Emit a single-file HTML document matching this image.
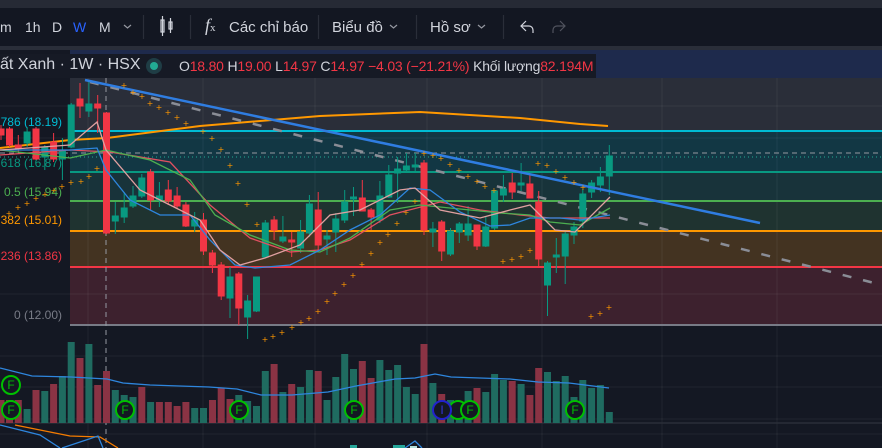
<!DOCTYPE html>
<html><head><meta charset="utf-8"><style>
*{margin:0;padding:0;box-sizing:border-box}
body{width:882px;height:448px;overflow:hidden;background:#141823;font-family:"Liberation Sans","Noto Sans CJK SC",sans-serif;position:relative}
.t{position:absolute;color:#d1d4dc;font-size:14px;white-space:nowrap}
svg{position:absolute;left:0;top:0}
</style></head><body>
<svg width="882" height="448" viewBox="0 0 882 448">
<rect x="0" y="0" width="882" height="8" fill="#262a35"/>
<rect x="0" y="8" width="882" height="38" fill="#131722"/>
<rect x="0" y="46" width="882" height="4" fill="#2a2e39"/>
<rect x="70" y="50" width="812" height="28" fill="#1e2a4c"/>
<rect x="0" y="50" width="70" height="28" fill="#141823"/>
<rect x="0" y="54" width="596" height="24" fill="#161a25"/>
<rect x="70" y="78" width="812" height="53" fill="#2a2e39"/>
<rect x="70" y="131" width="812" height="41" fill="#123744"/>
<rect x="70" y="172" width="812" height="29" fill="#18333a"/>
<rect x="70" y="201" width="812" height="30" fill="#1f3330"/>
<rect x="70" y="231" width="812" height="36" fill="#433321"/>
<rect x="70" y="267" width="812" height="58" fill="#3d212e"/>
<g stroke="#ffffff" stroke-opacity="0.06" stroke-width="1">
<line x1="88" y1="78" x2="88" y2="448"/><line x1="203" y1="78" x2="203" y2="448"/><line x1="315" y1="78" x2="315" y2="448"/><line x1="427" y1="78" x2="427" y2="448"/><line x1="542" y1="78" x2="542" y2="448"/><line x1="662" y1="78" x2="662" y2="448"/><line x1="777" y1="78" x2="777" y2="448"/>
<line x1="0" y1="106" x2="882" y2="106"/><line x1="0" y1="138" x2="882" y2="138"/><line x1="0" y1="294" x2="882" y2="294"/><line x1="0" y1="356" x2="882" y2="356"/><line x1="0" y1="387" x2="882" y2="387"/><line x1="0" y1="419" x2="882" y2="419"/><line x1="0" y1="434" x2="882" y2="434"/>
</g>
<line x1="70" y1="131" x2="882" y2="131" stroke="#00bcd4" stroke-width="2"/>
<line x1="70" y1="172" x2="882" y2="172" stroke="#089981" stroke-width="2"/>
<line x1="70" y1="201" x2="882" y2="201" stroke="#4caf50" stroke-width="2"/>
<line x1="70" y1="231" x2="882" y2="231" stroke="#ff9800" stroke-width="2"/>
<line x1="70" y1="267" x2="882" y2="267" stroke="#f23645" stroke-width="2"/>
<line x1="70" y1="325" x2="882" y2="325" stroke="#787b86" stroke-width="2"/>
<line x1="0" y1="153" x2="882" y2="153" stroke="#9598a1" stroke-dasharray="5,4"/>
<line x1="0" y1="157" x2="882" y2="157" stroke="#22ab94" stroke-dasharray="1,3"/>
<line x1="0" y1="423" x2="882" y2="423" stroke="#2a2e39" stroke-width="1.5"/>
<line x1="106" y1="78" x2="106" y2="448" stroke="#9598a1" stroke-dasharray="5,4"/>
<g font-size="12" text-anchor="end" font-family="Liberation Sans,sans-serif">
<text x="62" y="126" fill="#00bcd4">786 (18.19)</text>
<text x="62" y="167" fill="#089981">.618 (16.87)</text>
<text x="62" y="196" fill="#4caf50">0.5 (15.94)</text>
<text x="62" y="224" fill="#ff9800">382 (15.01)</text>
<text x="62" y="260" fill="#f23645">.236 (13.86)</text>
<text x="62" y="319" fill="#787b86">0 (12.00)</text>
</g>
<polyline fill="none" stroke="#ff9800" stroke-width="2" points="0,148 70,140 107,138 200,126 320,116 420,112 520,118 580,124 608,126"/>
<line x1="90" y1="82" x2="882" y2="285" stroke="#8a8d96" stroke-width="2.5" stroke-dasharray="9,12"/>
<g stroke-width="1">
<g stroke="#f23645" fill="#f23645">
<line x1="1" y1="125" x2="1" y2="140"/><rect x="-2" y="129" width="6" height="6"/>
<line x1="9.5" y1="127" x2="9.5" y2="147"/><rect x="6.5" y="129" width="6" height="16"/>
<line x1="18.3" y1="135" x2="18.3" y2="152"/><rect x="15.3" y="145" width="6" height="3"/>
<line x1="36" y1="127" x2="36" y2="160"/><rect x="33" y="129" width="6" height="30"/>
<line x1="53.6" y1="133" x2="53.6" y2="162"/><rect x="50.6" y="142" width="6" height="17"/>
<line x1="80" y1="83" x2="80" y2="118"/><rect x="77" y="99" width="6" height="7"/>
<line x1="97.7" y1="95" x2="97.7" y2="133"/><rect x="94.7" y="104" width="6" height="4"/>
<line x1="106.5" y1="112" x2="106.5" y2="234"/><rect x="103.5" y="113" width="6" height="120"/>
<line x1="150.6" y1="169" x2="150.6" y2="210"/><rect x="147.6" y="172" width="6" height="28"/>
<line x1="168.3" y1="180" x2="168.3" y2="205"/><rect x="165.3" y="190" width="6" height="11"/>
<line x1="177.1" y1="187" x2="177.1" y2="208"/><rect x="174.1" y="196" width="6" height="10"/>
<line x1="185.9" y1="202" x2="185.9" y2="227"/><rect x="182.9" y="205" width="6" height="21"/>
<line x1="203.5" y1="213" x2="203.5" y2="255"/><rect x="200.5" y="220" width="6" height="31"/>
<line x1="212.4" y1="250" x2="212.4" y2="273"/><rect x="209.4" y="253" width="6" height="12"/>
<line x1="221.2" y1="262" x2="221.2" y2="300"/><rect x="218.2" y="265" width="6" height="31"/>
<line x1="238.8" y1="272" x2="238.8" y2="325"/><rect x="235.8" y="274" width="6" height="34"/>
<line x1="274.1" y1="216" x2="274.1" y2="240"/><rect x="271.1" y="220" width="6" height="10"/>
<line x1="291.7" y1="232" x2="291.7" y2="257"/><rect x="288.7" y="240" width="6" height="2"/>
<line x1="318.2" y1="192" x2="318.2" y2="250"/><rect x="315.2" y="210" width="6" height="35"/>
<line x1="362.3" y1="180" x2="362.3" y2="211"/><rect x="359.3" y="198" width="6" height="13"/>
<line x1="371.1" y1="208" x2="371.1" y2="230"/><rect x="368.1" y="210" width="6" height="7"/>
<line x1="424" y1="160" x2="424" y2="235"/><rect x="421" y="163" width="6" height="67"/>
<line x1="441.7" y1="220" x2="441.7" y2="261"/><rect x="438.7" y="222" width="6" height="29"/>
<line x1="477" y1="225" x2="477" y2="250"/><rect x="474" y="225" width="6" height="21"/>
<line x1="512.2" y1="173" x2="512.2" y2="199"/><rect x="509.2" y="183" width="6" height="9"/>
<line x1="529.9" y1="175" x2="529.9" y2="198"/><rect x="526.9" y="184" width="6" height="14"/>
<line x1="538.7" y1="191" x2="538.7" y2="266"/><rect x="535.7" y="202" width="6" height="57"/>
</g>
<g stroke="#089981" fill="#089981">
<line x1="27.1" y1="127" x2="27.1" y2="147"/><rect x="24.1" y="132" width="6" height="11"/>
<line x1="44.8" y1="145" x2="44.8" y2="170"/><rect x="41.8" y="147" width="6" height="10"/>
<line x1="62.4" y1="138" x2="62.4" y2="180"/><rect x="59.4" y="151" width="6" height="8"/>
<line x1="71.2" y1="103" x2="71.2" y2="148"/><rect x="68.2" y="105" width="6" height="42"/>
<line x1="88.9" y1="80" x2="88.9" y2="117"/><rect x="85.9" y="104" width="6" height="7"/>
<line x1="115.3" y1="202" x2="115.3" y2="234"/><rect x="112.3" y="216" width="6" height="5"/>
<line x1="124.2" y1="192" x2="124.2" y2="223"/><rect x="121.2" y="208" width="6" height="9"/>
<line x1="133" y1="186" x2="133" y2="208"/><rect x="130" y="196" width="6" height="10"/>
<line x1="141.8" y1="174" x2="141.8" y2="198"/><rect x="138.8" y="178" width="6" height="18"/>
<line x1="159.4" y1="182" x2="159.4" y2="207"/><rect x="156.4" y="196" width="6" height="4"/>
<line x1="194.7" y1="212" x2="194.7" y2="232"/><rect x="191.7" y="220" width="6" height="6"/>
<line x1="230" y1="267" x2="230" y2="318"/><rect x="227" y="277" width="6" height="21"/>
<line x1="247.6" y1="295" x2="247.6" y2="339"/><rect x="244.6" y="301" width="6" height="16"/>
<line x1="256.5" y1="277" x2="256.5" y2="312"/><rect x="253.5" y="277" width="6" height="34"/>
<line x1="265.3" y1="220" x2="265.3" y2="257"/><rect x="262.3" y="223" width="6" height="34"/>
<line x1="282.9" y1="216" x2="282.9" y2="243"/><rect x="279.9" y="237" width="6" height="4"/>
<line x1="300.6" y1="220" x2="300.6" y2="253"/><rect x="297.6" y="232" width="6" height="16"/>
<line x1="309.4" y1="195" x2="309.4" y2="237"/><rect x="306.4" y="204" width="6" height="29"/>
<line x1="327" y1="230" x2="327" y2="255"/><rect x="324" y="236" width="6" height="3"/>
<line x1="335.8" y1="213" x2="335.8" y2="252"/><rect x="332.8" y="219" width="6" height="13"/>
<line x1="344.7" y1="190" x2="344.7" y2="223"/><rect x="341.7" y="202" width="6" height="18"/>
<line x1="353.5" y1="187" x2="353.5" y2="216"/><rect x="350.5" y="197" width="6" height="2"/>
<line x1="379.9" y1="181" x2="379.9" y2="223"/><rect x="376.9" y="196" width="6" height="24"/>
<line x1="388.8" y1="165" x2="388.8" y2="198"/><rect x="385.8" y="175" width="6" height="22"/>
<line x1="397.6" y1="157" x2="397.6" y2="203"/><rect x="394.6" y="169" width="6" height="4"/>
<line x1="406.4" y1="153" x2="406.4" y2="172"/><rect x="403.4" y="166" width="6" height="4"/>
<line x1="415.2" y1="153" x2="415.2" y2="172"/><rect x="412.2" y="165" width="6" height="2"/>
<line x1="432.9" y1="222" x2="432.9" y2="247"/><rect x="429.9" y="229" width="6" height="3"/>
<line x1="450.5" y1="228" x2="450.5" y2="256"/><rect x="447.5" y="231" width="6" height="23"/>
<line x1="459.3" y1="222" x2="459.3" y2="243"/><rect x="456.3" y="224" width="6" height="8"/>
<line x1="468.1" y1="206" x2="468.1" y2="241"/><rect x="465.1" y="224" width="6" height="11"/>
<line x1="485.8" y1="217" x2="485.8" y2="247"/><rect x="482.8" y="227" width="6" height="19"/>
<line x1="494.6" y1="190" x2="494.6" y2="230"/><rect x="491.6" y="191" width="6" height="37"/>
<line x1="503.4" y1="175" x2="503.4" y2="202"/><rect x="500.4" y="189" width="6" height="6"/>
<line x1="521.1" y1="163" x2="521.1" y2="191"/><rect x="518.1" y="183" width="6" height="2"/>
<line x1="547.5" y1="261" x2="547.5" y2="316"/><rect x="544.5" y="263" width="6" height="22"/>
<line x1="556.3" y1="238" x2="556.3" y2="273"/><rect x="553.3" y="255" width="6" height="2"/>
<line x1="565.2" y1="232" x2="565.2" y2="284"/><rect x="562.2" y="234" width="6" height="22"/>
<line x1="574" y1="222" x2="574" y2="244"/><rect x="571" y="227" width="6" height="8"/>
<line x1="582.8" y1="189" x2="582.8" y2="228"/><rect x="579.8" y="194" width="6" height="27"/>
<line x1="591.6" y1="180" x2="591.6" y2="198"/><rect x="588.6" y="183" width="6" height="9"/>
<line x1="600.4" y1="167" x2="600.4" y2="192"/><rect x="597.4" y="177" width="6" height="8"/>
<line x1="609.3" y1="145" x2="609.3" y2="195"/><rect x="606.3" y="156" width="6" height="20"/>
</g>
</g>
<g fill="none" stroke-width="1.3">
<polyline stroke="#e05060" points="0,155 70,150 110,152 170,162 210,205 250,238 290,252 320,250 350,240 390,215 440,202 480,210 520,215 550,218 580,218 610,218"/>
<polyline stroke="#4caf50" points="0,150 70,158 106,150 150,160 190,180 215,215 250,235 290,250 320,252 350,238 390,210 420,205 470,210 500,213 530,215 550,222 580,225 610,208"/>
<polyline stroke="#2e86de" points="0,150 70,150 97,148 106,170 130,200 160,215 190,215 210,240 235,265 255,268 290,265 320,250 350,230 380,215 410,188 430,190 460,212 490,226 510,225 530,218 560,218 580,220 610,215"/>
<polyline stroke="#e0a0a0" points="0,150 70,145 97,122 106,150 140,190 170,205 200,220 220,250 240,265 265,258 300,245 330,215 360,210 400,190 415,188 440,210 480,218 510,210 530,205 555,230 575,232 610,197"/>
</g>
<line x1="85" y1="80" x2="760" y2="223" stroke="#2f7de1" stroke-width="2.5"/>
<g fill="#ff9800" font-size="8" text-anchor="middle" font-family="DejaVu Sans,sans-serif">
<text x="124" y="88">+</text><text x="133" y="95">+</text><text x="142" y="99">+</text><text x="150" y="106">+</text><text x="159" y="110">+</text><text x="168" y="115">+</text><text x="177" y="120">+</text><text x="186" y="126">+</text><text x="203" y="134">+</text><text x="212" y="141">+</text><text x="221" y="152">+</text><text x="230" y="168">+</text><text x="238" y="186">+</text><text x="247" y="207">+</text><text x="257" y="227">+</text>
<text x="265" y="342">+</text><text x="273" y="339">+</text><text x="282" y="335">+</text><text x="292" y="330">+</text><text x="301" y="325">+</text><text x="309" y="321">+</text><text x="318" y="314">+</text><text x="327" y="304">+</text><text x="335" y="296">+</text><text x="344" y="287">+</text><text x="353" y="278">+</text><text x="362" y="267">+</text><text x="371" y="256">+</text><text x="380" y="245">+</text><text x="388" y="237">+</text><text x="397" y="226">+</text><text x="406" y="215">+</text><text x="415" y="204">+</text>
<text x="424" y="156">+</text><text x="433" y="158">+</text><text x="441" y="161">+</text><text x="450" y="167">+</text><text x="459" y="173">+</text><text x="468" y="179">+</text><text x="477" y="184">+</text><text x="485" y="189">+</text><text x="494" y="193">+</text>
<text x="503" y="264">+</text><text x="512" y="262">+</text><text x="521" y="259">+</text><text x="530" y="253">+</text>
<text x="538" y="166">+</text><text x="547" y="168">+</text><text x="556" y="174">+</text><text x="565" y="180">+</text><text x="574" y="185">+</text><text x="583" y="190">+</text>
<text x="591" y="319">+</text><text x="600" y="316">+</text><text x="609" y="310">+</text>
<text x="71" y="185">+</text><text x="81" y="184">+</text><text x="89" y="179">+</text><text x="97" y="171">+</text>
<text x="9" y="216">+</text><text x="18" y="210">+</text><text x="27" y="206">+</text><text x="36" y="201">+</text><text x="45" y="197">+</text><text x="54" y="193">+</text><text x="62" y="189">+</text>
</g>
<g fill="#8a3344">
<rect x="-2.5" y="400" width="7" height="23"/><rect x="6" y="400" width="7" height="23"/><rect x="14.8" y="400" width="7" height="23"/><rect x="32.5" y="390" width="7" height="33"/><rect x="50.1" y="384" width="7" height="39"/><rect x="76.5" y="358" width="7" height="65"/><rect x="94.2" y="385" width="7" height="38"/><rect x="103" y="371" width="7" height="52"/><rect x="138.3" y="387" width="7" height="36"/><rect x="155.9" y="402" width="7" height="21"/><rect x="164.8" y="402" width="7" height="21"/><rect x="173.6" y="406" width="7" height="17"/><rect x="182.4" y="402" width="7" height="21"/><rect x="209" y="400" width="7" height="23"/><rect x="217.7" y="388" width="7" height="35"/><rect x="226.5" y="399" width="7" height="24"/><rect x="270.6" y="364" width="7" height="59"/><rect x="288.2" y="384" width="7" height="39"/><rect x="314.7" y="371" width="7" height="52"/><rect x="358.8" y="361" width="7" height="62"/><rect x="367.6" y="378" width="7" height="45"/><rect x="420.5" y="344" width="7" height="79"/><rect x="438.2" y="394" width="7" height="29"/><rect x="473.5" y="388" width="7" height="35"/><rect x="508.7" y="381" width="7" height="42"/><rect x="526.4" y="395" width="7" height="28"/><rect x="535.2" y="368" width="7" height="55"/>
</g>
<g fill="#1f6b60">
<rect x="23.6" y="409" width="7" height="14"/><rect x="41.3" y="391" width="7" height="32"/><rect x="58.9" y="376" width="7" height="47"/><rect x="67.7" y="342" width="7" height="81"/><rect x="85.4" y="344" width="7" height="79"/><rect x="111.8" y="390" width="7" height="33"/><rect x="120.7" y="395" width="7" height="28"/><rect x="129.5" y="397" width="7" height="26"/><rect x="147.1" y="402" width="7" height="21"/><rect x="191.2" y="408" width="7" height="15"/><rect x="200" y="408" width="7" height="15"/><rect x="235.3" y="395" width="7" height="28"/><rect x="244.1" y="401" width="7" height="22"/><rect x="253" y="406" width="7" height="17"/><rect x="261.8" y="371" width="7" height="52"/><rect x="279.4" y="392" width="7" height="31"/><rect x="297.1" y="387" width="7" height="36"/><rect x="305.9" y="370" width="7" height="53"/><rect x="323.5" y="400" width="7" height="23"/><rect x="332.3" y="377" width="7" height="46"/><rect x="341.2" y="354" width="7" height="69"/><rect x="350" y="369" width="7" height="54"/><rect x="376.4" y="360" width="7" height="63"/><rect x="385.3" y="370" width="7" height="53"/><rect x="394.1" y="365" width="7" height="58"/><rect x="402.9" y="387" width="7" height="36"/><rect x="411.7" y="394" width="7" height="29"/><rect x="429.4" y="383" width="7" height="40"/><rect x="447" y="400" width="7" height="23"/><rect x="455.8" y="402" width="7" height="21"/><rect x="464.6" y="391" width="7" height="32"/><rect x="482.3" y="392" width="7" height="31"/><rect x="491.1" y="374" width="7" height="49"/><rect x="499.9" y="380" width="7" height="43"/><rect x="517.6" y="384" width="7" height="39"/><rect x="544" y="372" width="7" height="51"/><rect x="552.8" y="381" width="7" height="42"/><rect x="561.7" y="376" width="7" height="47"/><rect x="570.5" y="397" width="7" height="26"/><rect x="579.3" y="380" width="7" height="43"/><rect x="588.1" y="388" width="7" height="35"/><rect x="596.9" y="385" width="7" height="38"/><rect x="605.8" y="412" width="7" height="11"/>
</g>
<polyline fill="none" stroke="#2e86de" stroke-width="1.3" points="0,368 32,376 71,377 107,379 123,383 150,385 209,387 237,389 261,395 292,395 328,392 356,386 395,379 415,378 435,374 451,377 510,379 538,382 569,383 609,388"/>
<polyline fill="none" stroke="#f57c00" stroke-width="1.3" points="15,425 70,436 100,437 118,448"/>
<polyline fill="none" stroke="#2e86de" stroke-width="1.3" points="0,425 40,435 60,448"/>
<polyline fill="none" stroke="#2e86de" stroke-width="1.3" points="62,448 98,436 103,448"/>
<polyline fill="none" stroke="#2e86de" stroke-width="1.3" points="405,448 415,441 422,448"/>
<rect x="350" y="445" width="7" height="3" fill="#26a69a"/><rect x="393" y="445" width="12" height="3" fill="#26a69a"/><rect x="410" y="446" width="7" height="2" fill="#b2dfdb"/>
<g fill="#141823" stroke="#00c000" stroke-width="2" >
<circle cx="11" cy="385" r="9"/><circle cx="11" cy="410" r="9"/><circle cx="125" cy="410" r="9"/><circle cx="239" cy="410" r="9"/><circle cx="354" cy="410" r="9"/><circle cx="458" cy="410" r="9"/><circle cx="442" cy="410" r="9" stroke="#2222cc"/><circle cx="470" cy="410" r="9"/><circle cx="575" cy="410" r="9"/>
</g>
<g fill="#00c000" font-size="12" text-anchor="middle" font-family="Liberation Sans,sans-serif">
<text x="11" y="389">F</text><text x="11" y="414">F</text><text x="125" y="414">F</text><text x="239" y="414">F</text><text x="354" y="414">F</text><text x="442" y="414" fill="#3333dd">I</text><text x="470" y="414">F</text><text x="575" y="414">F</text>
</g>
<g stroke="#d1d4dc" fill="none" stroke-width="1.2">
<path d="M124 25l3.5 3 3.5-3" stroke="#9598a1"/>
<line x1="143.5" y1="15" x2="143.5" y2="39" stroke="#2a2e39"/>
<rect x="161" y="20" width="3" height="12"/><line x1="162.5" y1="16" x2="162.5" y2="36"/>
<rect x="169" y="22" width="3" height="7"/><line x1="170.5" y1="18" x2="170.5" y2="33"/>
<line x1="190.5" y1="15" x2="190.5" y2="39" stroke="#2a2e39"/>
<line x1="318.5" y1="15" x2="318.5" y2="39" stroke="#2a2e39"/>
<path d="M390 25l3.5 3 3.5-3" stroke="#9598a1"/>
<line x1="416.5" y1="15" x2="416.5" y2="39" stroke="#2a2e39"/>
<path d="M478 25l3.5 3 3.5-3" stroke="#9598a1"/>
<line x1="503.5" y1="15" x2="503.5" y2="39" stroke="#2a2e39"/>
<path d="M526 21l-5 5 5 5M521 26h8a4 4 0 0 1 4 4v3"/>
<path d="M560 21l5 5-5 5M565 26h-8a4 4 0 0 0-4 4v3" stroke="#50535e"/>
</g>
<circle cx="154" cy="66" r="8" fill="#1f3d45"/><circle cx="154" cy="66" r="4" fill="#22ab94"/>
</svg>
<div class="t" style="left:0;top:19px">m</div>
<div class="t" style="left:25px;top:19px">1h</div>
<div class="t" style="left:52px;top:19px">D</div>
<div class="t" style="left:73px;top:19px;color:#2962ff">W</div>
<div class="t" style="left:99px;top:19px">M</div>
<div class="t" style="left:205px;top:15px;font-family:'Liberation Serif',serif;font-style:italic;font-size:18px">f<span style="font-size:11px;font-style:normal">x</span></div>
<div class="t" style="left:229px;top:19px;font-size:15px">Các chỉ báo</div>
<div class="t" style="left:332px;top:19px;font-size:15px">Biểu đồ</div>
<div class="t" style="left:430px;top:19px;font-size:15px">Hồ sơ</div>
<div class="t" style="left:0;top:56px;font-size:16px">ất Xanh · 1W · HSX</div>
<div class="t" style="left:179px;top:58px;font-size:14px;letter-spacing:-0.2px">O<span style="color:#f23645">18.80</span> H<span style="color:#f23645">19.00</span> L<span style="color:#f23645">14.97</span> C<span style="color:#f23645">14.97 −4.03 (−21.21%)</span> Khối lượng<span style="color:#f23645">82.194M</span></div>
</body></html>
